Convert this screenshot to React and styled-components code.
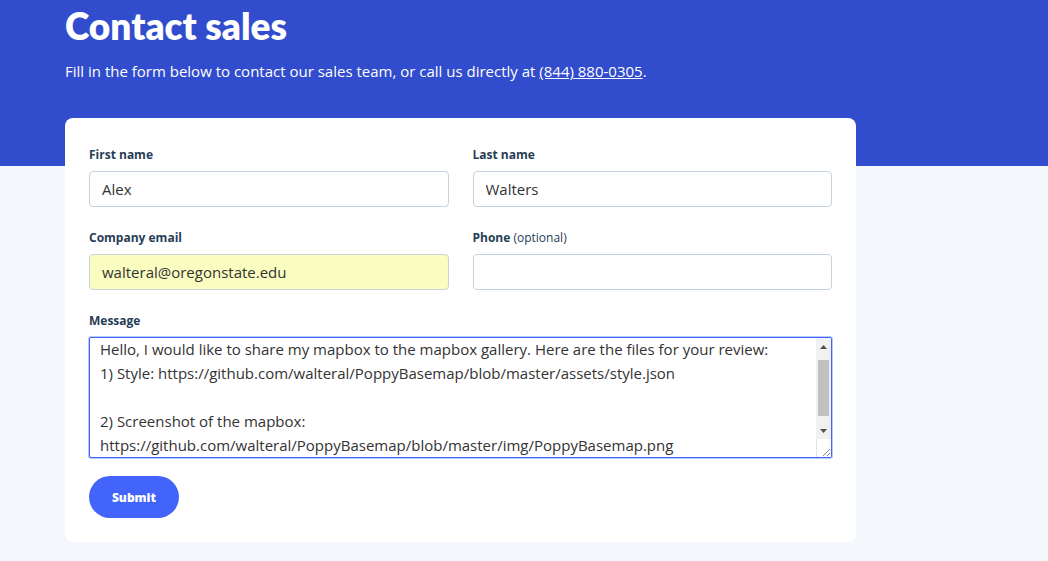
import React, { useEffect, useRef } from 'react';
import styled, { createGlobalStyle } from 'styled-components';

const Global = createGlobalStyle`
  html, body {
    margin: 0;
    background: #f4f7fb;
    font-family: "Open Sans", "Liberation Sans", sans-serif;
    color: #273d56;
  }
`;

const Hero = styled.header`
  background: #314ccd;
  padding: 4px 65px 84px;
  color: #fff;
`;

const Title = styled.h1`
  margin: 0;
  font-family: Lato, "Open Sans", sans-serif;
  font-weight: 800;
  font-size: 37px;
  line-height: 44px;
`;

const Lead = styled.p`
  margin: 12px 0 0;
  font-size: 15px;
  line-height: 22px;

  a {
    color: #fff;
  }
`;

const Card = styled.form`
  margin: -48px 0 20px 65px;
  width: 791px;
  box-sizing: border-box;
  background: #fff;
  border-radius: 8px;
  padding: 28px 24px 24px;
`;

const Grid = styled.div`
  display: grid;
  grid-template-columns: 1fr 1fr;
  column-gap: 24px;
  row-gap: 22px;
`;

const Field = styled.div`
  grid-column: ${p => (p.$wide ? '1 / -1' : 'auto')};
  display: flex;
  flex-direction: column;
  gap: 7px;
`;

const Label = styled.label`
  font-size: 12px;
  font-weight: 700;
  line-height: 18px;
  color: #273d56;

  span {
    font-weight: 400;
  }
`;

const Input = styled.input`
  box-sizing: border-box;
  height: 36px;
  border: 1px solid #c6d1de;
  border-radius: 4px;
  padding: 0 12px;
  font-family: inherit;
  font-size: 15px;
  color: #333;
  background: ${p => (p.$autofill ? '#fafdc0' : '#fff')};
  outline: none;
`;

const MessageBox = styled.div`
  box-sizing: border-box;
  height: 121px;
  border: 1px solid #4264fb;
  border-radius: 2px;
  box-shadow: 0 0 0 1px rgba(110, 150, 252, 0.5);
  display: flex;
  background: #fff;
`;

const TextArea = styled.textarea`
  flex: 1;
  border: 0;
  margin: 0;
  padding: 6px 10px;
  font-family: inherit;
  font-size: 15px;
  line-height: 24px;
  color: #333;
  caret-color: #000;
  outline: none;
  overflow: hidden;
  resize: none;
  background: transparent;
`;

const ScrollBar = styled.div`
  width: 15px;
  display: flex;
  flex-direction: column;
  background: #f1f1f1;
`;

const ArrowBtn = styled.div`
  height: 17px;
  display: flex;
  align-items: center;
  justify-content: center;
`;

const Track = styled.div`
  flex: 1;
  padding: 5px 2px;
  display: flex;
`;

const Thumb = styled.div`
  width: 100%;
  height: 56px;
  background: #c1c1c1;
`;

const Corner = styled.div`
  height: 18px;
  background: #fff;
  border-left: 1px solid #e2e2e2;
  display: flex;
  align-items: flex-end;
  justify-content: flex-end;
`;

const Submit = styled.button`
  margin-top: 18px;
  width: 90px;
  height: 42px;
  border: 0;
  border-radius: 21px;
  background: #4264fb;
  color: #fff;
  font-family: inherit;
  font-size: 12px;
  font-weight: 800;
`;

const message = `Hello, I would like to share my mapbox to the mapbox gallery. Here are the files for your review:
1) Style: https://github.com/walteral/PoppyBasemap/blob/master/assets/style.json

2) Screenshot of the mapbox:
https://github.com/walteral/PoppyBasemap/blob/master/img/PoppyBasemap.png`;

const Arrow = ({ down }) => (
  <svg width="7" height="4" viewBox="0 0 7 4">
    <path d={down ? 'M0 0h7L3.5 4z' : 'M0 4h7L3.5 0z'} fill="#505050" />
  </svg>
);

export default function App() {
  const ta = useRef(null);

  useEffect(() => {
    const el = ta.current;
    if (!el) return;
    el.focus();
    el.setSelectionRange(el.value.length, el.value.length);
    el.scrollTop = 7;
  }, []);

  return (
    <>
      <Global />
      <Hero>
        <Title>Contact sales</Title>
        <Lead>
          Fill in the form below to contact our sales team, or call us directly at <a href="#">(844) 880-0305</a>.
        </Lead>
      </Hero>
      <Card onSubmit={e => e.preventDefault()}>
        <Grid>
          <Field>
            <Label>First name</Label>
            <Input defaultValue="Alex" />
          </Field>
          <Field>
            <Label>Last name</Label>
            <Input defaultValue="Walters" />
          </Field>
          <Field>
            <Label>Company email</Label>
            <Input $autofill defaultValue="walteral@oregonstate.edu" />
          </Field>
          <Field>
            <Label>Phone <span>(optional)</span></Label>
            <Input />
          </Field>
          <Field $wide>
            <Label>Message</Label>
            <MessageBox>
              <TextArea ref={ta} defaultValue={message} />
              <ScrollBar>
                <ArrowBtn><Arrow /></ArrowBtn>
                <Track><Thumb /></Track>
                <ArrowBtn><Arrow down /></ArrowBtn>
                <Corner>
                  <svg width="10" height="10" viewBox="0 0 10 10">
                    <path d="M9 2L2 9M9 6L6 9" stroke="#8a8a8a" strokeWidth="1" />
                  </svg>
                </Corner>
              </ScrollBar>
            </MessageBox>
          </Field>
        </Grid>
        <Submit type="submit">Submit</Submit>
      </Card>
    </>
  );
}
